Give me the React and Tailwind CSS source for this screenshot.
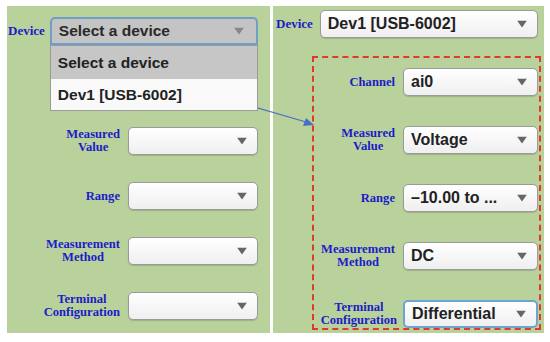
import React from 'react';

const labelCls = "text-center font-bold text-[12.6px] leading-[13px] text-[#1c1cc8] whitespace-nowrap";
const labelFont = { fontFamily: '"Liberation Serif", "Times New Roman", serif' };

function Caret() {
  return (
    <svg width="10" height="7" viewBox="0 0 10 7" className="absolute right-[10px] top-1/2 -translate-y-1/2">
      <polygon points="0,0 10,0 5,7" fill="#666" />
    </svg>
  );
}

function Select({ value, width, focused, big }) {
  return (
    <div
      className={`relative h-[28px] shrink-0 rounded-[5px] bg-gradient-to-b from-white to-[#efefef] flex items-center pl-[7px] ${focused ? 'border-2 border-[#6ea4d4]' : 'border-[1.5px] border-[#9a9a9a] shadow-[0_1px_1px_rgba(0,0,0,0.15)]'}`}
      style={{ width }}
    >
      <span className={`font-bold text-[#222] ${big ? 'text-[16px]' : 'text-[15.5px]'}`} style={{ fontFamily: '"Liberation Sans", Arial, sans-serif' }}>{value}</span>
      <Caret />
    </div>
  );
}

function Row({ label, value, width, gap, focused }) {
  return (
    <div className="flex items-center justify-end h-[28px]" style={{ gap }}>
      <div className={labelCls} style={labelFont}>
        {label.map((l) => <div key={l}>{l}</div>)}
      </div>
      <Select value={value} width={width} focused={focused} big />
    </div>
  );
}

export default function App() {
  return (
    <div className="relative w-[550px] h-[342px] bg-white flex gap-[3px] pl-[7px] pt-[6px]">
      {/* left panel: dropdown open */}
      <div className="w-[263px] h-[327px] bg-[#b9d19b] flex flex-col pr-[12px]">
        <div className="flex items-start gap-[5px] pt-[11px] pl-[1px] relative z-10">
          <div className="font-bold text-[13px] text-[#1c1cc8] mt-[4px]" style={labelFont}>Device</div>
          <div className="relative w-[208px]">
            <div className="relative h-[28px] rounded-t-[5px] bg-[#c4c4c4] border-2 border-[#6f9ec6] flex items-center pl-[7px]">
              <span className="font-bold text-[15.5px] text-[#2a2a2a]" style={{ fontFamily: '"Liberation Sans", Arial, sans-serif' }}>Select a device</span>
              <svg width="10" height="7" viewBox="0 0 10 7" className="absolute right-[12px] top-1/2 -translate-y-1/2">
                <polygon points="0,0 10,0 5,7" fill="#888" />
              </svg>
            </div>
            <div className="absolute left-0 top-[28px] w-full border border-[#9a9a9a] bg-white" style={{ fontFamily: '"Liberation Sans", Arial, sans-serif' }}>
              <div className="h-[33px] bg-[#c6c6c6] flex items-center pl-[7px] font-bold text-[15.5px] text-[#222]">Select a device</div>
              <div className="h-[31px] bg-[#f9f9f9] flex items-center pl-[7px] font-bold text-[15.5px] text-[#222]">Dev1 [USB-6002]</div>
            </div>
          </div>
        </div>
        <div className="flex flex-col gap-[27px] mt-[82px]">
          {[["Measured", "Value"], ["Range"], ["Measurement", "Method"], ["Terminal", "Configuration"]].map((l) => (
            <div key={l[0]} className="flex items-center justify-end gap-[8px] h-[28px]">
              <div className={labelCls} style={labelFont}>
                {l.map((t) => <div key={t}>{t}</div>)}
              </div>
              <Select value="" width={130} />
            </div>
          ))}
        </div>
      </div>

      {/* right panel: device selected */}
      <div className="w-[271px] h-[327px] bg-[#b9d19b] flex flex-col">
        <div className="flex items-center gap-[7px] pt-[4px] pl-[3px]">
          <div className="font-bold text-[13px] text-[#1c1cc8]" style={labelFont}>Device</div>
          <Select value="Dev1 [USB-6002]" width={218} big />
        </div>
        <div className="mt-[18px] ml-[39px] w-[229px] h-[274px] border-2 border-dashed border-[#e2392e] pt-[10px] pr-[1px] flex flex-col gap-[30px]">
          <Row label={["Channel"]} value="ai0" width={135} gap={8} />
          <Row label={["Measured", "Value"]} value="Voltage" width={135} gap={8} />
          <Row label={["Range"]} value="–10.00 to ..." width={135} gap={8} />
          <Row label={["Measurement", "Method"]} value="DC" width={135} gap={8} />
          <Row label={["Terminal", "Configuration"]} value="Differential" width={135} gap={6} focused />
        </div>
      </div>

      {/* connector arrow */}
      <svg className="absolute inset-0 pointer-events-none" width="550" height="342">
        <line x1="203" y1="92" x2="306" y2="122" stroke="#4a70c2" strokeWidth="1.3" />
        <polygon points="314,125 303,126 306,118" fill="#4a70c2" />
      </svg>
    </div>
  );
}
